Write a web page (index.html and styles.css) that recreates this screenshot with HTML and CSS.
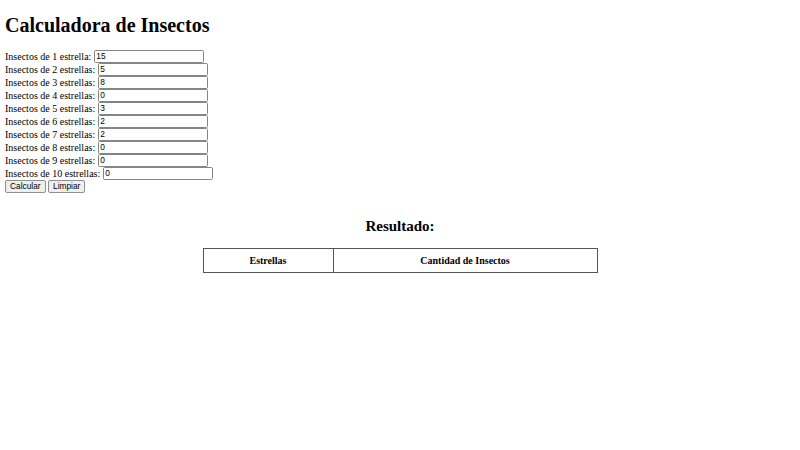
FILE: index.html
```html
<!DOCTYPE html>
<html lang="es">
<head>
<meta charset="utf-8">
<title>Calculadora de Insectos</title>
<link rel="stylesheet" href="styles.css">
</head>
<body>
<h1 class="title">Calculadora de Insectos</h1>
<form class="calc">
  <div class="row"><label for="s1">Insectos de 1 estrella:</label><input id="s1" class="field" type="text" value="15"></div>
  <div class="row"><label for="s2">Insectos de 2 estrellas:</label><input id="s2" class="field" type="text" value="5"></div>
  <div class="row"><label for="s3">Insectos de 3 estrellas:</label><input id="s3" class="field" type="text" value="8"></div>
  <div class="row"><label for="s4">Insectos de 4 estrellas:</label><input id="s4" class="field" type="text" value="0"></div>
  <div class="row"><label for="s5">Insectos de 5 estrellas:</label><input id="s5" class="field" type="text" value="3"></div>
  <div class="row"><label for="s6">Insectos de 6 estrellas:</label><input id="s6" class="field" type="text" value="2"></div>
  <div class="row"><label for="s7">Insectos de 7 estrellas:</label><input id="s7" class="field" type="text" value="2"></div>
  <div class="row"><label for="s8">Insectos de 8 estrellas:</label><input id="s8" class="field" type="text" value="0"></div>
  <div class="row"><label for="s9">Insectos de 9 estrellas:</label><input id="s9" class="field" type="text" value="0"></div>
  <div class="row"><label for="s10">Insectos de 10 estrellas:</label><input id="s10" class="field" type="text" value="0"></div>
  <div class="row buttons">
    <button type="button" class="btn">Calcular</button>
    <button type="reset" class="btn">Limpiar</button>
  </div>
</form>
<section class="result">
  <h2 class="result-title">Resultado:</h2>
  <table class="result-table">
    <thead>
      <tr><th class="col-stars">Estrellas</th><th>Cantidad de Insectos</th></tr>
    </thead>
    <tbody></tbody>
  </table>
</section>
</body>
</html>
```
FILE: styles.css
```css
html { background: #fff; }
body {
  margin: 5px;
  font-family: "Liberation Serif", "Times New Roman", serif;
  font-size: 10px;
  color: #000;
}
.title {
  font-size: 20px;
  font-weight: bold;
  margin: 8.5px 0 13.4px;
}
.calc { margin: 0; }
.row {
  display: flex;
  align-items: center;
  gap: 2.5px;
  height: 13px;
}
.field {
  box-sizing: border-box;
  width: 110px;
  height: 13px;
  margin: 0;
  padding: 0 1.5px;
  font-family: "Liberation Sans", Arial, sans-serif;
  font-size: 8.33px;
  color: #000;
  background: #fff;
  border: 1px solid #858585;
  border-radius: 1.5px;
}
.buttons { gap: 2.5px; }
.btn {
  box-sizing: border-box;
  height: 13px;
  margin: 0;
  padding: 0 4px;
  font-family: "Liberation Sans", Arial, sans-serif;
  font-size: 8.33px;
  color: #000;
  background: #efefef;
  border: 1px solid #8f8f8f;
  border-radius: 2px;
  line-height: 1;
}
.result {
  text-align: center;
  padding-top: 13px;
}
.result-title {
  font-size: 15px;
  font-weight: bold;
  margin: 12.45px 0;
}
.result-table {
  width: 395px;
  margin: 0 auto;
  border-collapse: collapse;
  border: 1px solid #555;
}
.result-table th {
  border: 1px solid #555;
  padding: 6px;
  font-size: 10px;
  font-weight: bold;
  height: 10px;
}
.col-stars { width: 117px; }
```
